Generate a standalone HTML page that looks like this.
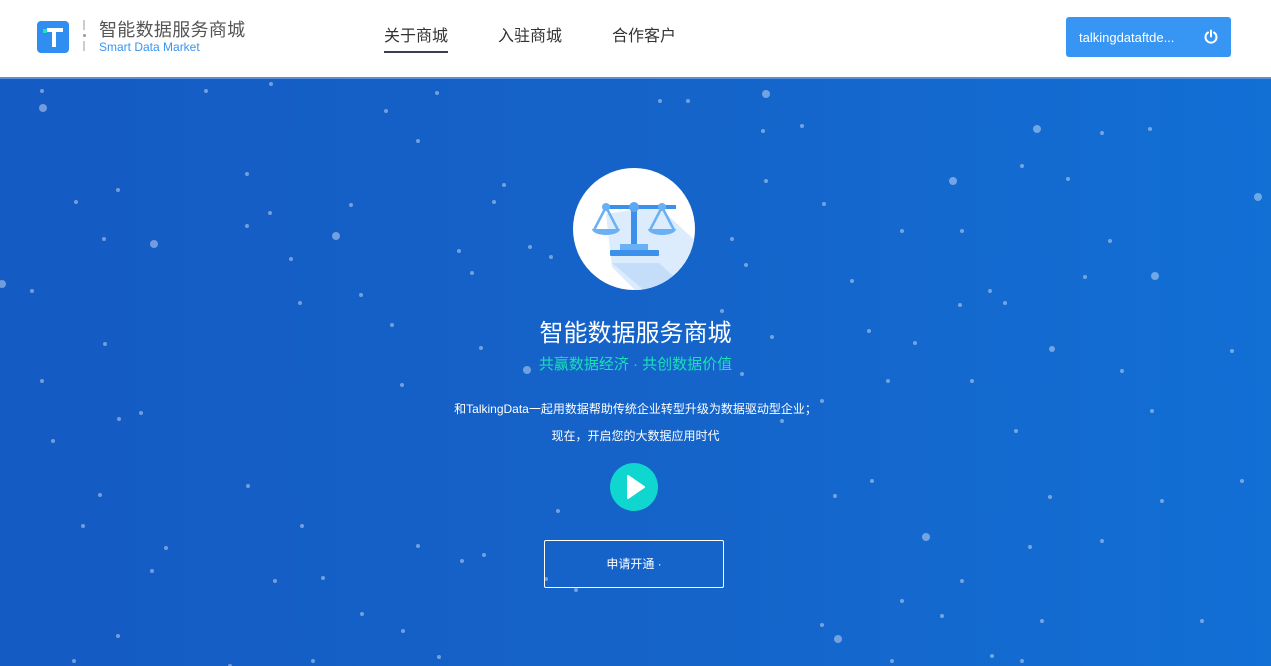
<!DOCTYPE html>
<html><head><meta charset="utf-8"><style>
*{margin:0;padding:0;box-sizing:border-box}
body{width:1271px;height:666px;overflow:hidden;font-family:"Liberation Sans","Noto Sans CJK SC",sans-serif;position:relative}
.hdr{position:absolute;left:0;top:0;width:1271px;height:77px;background:#fff}
.hero{position:absolute;left:0;top:77px;width:1271px;height:589px;background:linear-gradient(90deg,#145bc3 0%,#1563c9 50%,#126fd4 100%);border-top:2px solid #5a8fd8;overflow:hidden}
.logo{position:absolute;left:37px;top:21px;width:32px;height:32px;background:#2f8ef0;border-radius:4px}
.sep{position:absolute;left:83px;top:20px;width:2px;height:32px}
.t1{position:absolute;left:99px;top:19px;font-size:18px;line-height:22px;color:#555;letter-spacing:0.3px}
.t2{position:absolute;left:99px;top:40px;font-size:12px;line-height:14px;color:#3a95ee}
.nav{position:absolute;top:22px;font-size:16px;color:#333}
.btn{position:absolute;left:1066px;top:17px;width:165px;height:40px;background:#3795f4;border-radius:3px;color:#fff;font-size:13px;padding:13px 0 0 13px}
.dots{position:absolute;left:0;top:0;width:4px;height:4px;border-radius:50%;background:transparent;color:rgba(255,255,255,.4)}
.c{position:absolute;left:0;width:1271px;text-align:center}
</style></head><body>
<div class="hdr">
 <div class="logo"><svg width="32" height="32"><rect x="6" y="8" width="4" height="4" fill="#22e0c0"/><rect x="10" y="7" width="16" height="4" fill="#fff"/><rect x="15" y="7" width="4" height="19" fill="#fff"/></svg></div>
 <div class="sep"><div style="width:2px;height:10px;background:#ccc"></div><div style="width:3px;height:3px;background:#999;margin:4px 0;border-radius:50%"></div><div style="width:2px;height:10px;background:#ccc"></div></div>
 <div class="t1">智能数据服务商城</div>
 <div class="t2">Smart Data Market</div>
 <div class="nav" style="left:384px">关于商城</div>
 <div style="position:absolute;left:384px;top:51px;width:64px;height:2px;background:#3a3f4c"></div>
 <div class="nav" style="left:498px">入驻商城</div>
 <div class="nav" style="left:612px">合作客户</div>
 <div class="btn">talkingdataftde...
  <svg style="position:absolute;left:137px;top:12px" width="16" height="16" viewBox="0 0 16 16"><path d="M5 3.5A5.5 5.5 0 1 0 11 3.5" fill="none" stroke="#fff" stroke-width="2" stroke-linecap="round"/><path d="M8 1.5V7.5" stroke="#fff" stroke-width="2" stroke-linecap="round"/></svg>
 </div>
</div>
<div class="hero">
 <div class="dots" style="box-shadow:41px 27px 0 2px,204px 10px,269px 3px,74px 121px,116px 109px,152px 163px 0 2px,102px 158px,268px 132px,245px 93px,334px 155px 0 2px,349px 124px,0 203px 0 2px,30px 210px,298px 222px,289px 178px,245px 145px,359px 214px,390px 244px,103px 263px,40px 300px,117px 338px,139px 332px,51px 360px,98px 414px,81px 445px,246px 405px,300px 445px,164px 467px,150px 490px,273px 500px,321px 497px,401px 550px,437px 576px,311px 580px,360px 533px,116px 555px,72px 580px,228px 585px,40px 10px,435px 12px,384px 30px,416px 60px,492px 121px,502px 104px,528px 166px,549px 176px,457px 170px,470px 192px,400px 304px,479px 267px,525px 289px 0 2px,556px 430px,460px 480px,482px 474px,416px 465px,574px 509px,544px 498px,658px 20px,686px 20px,764px 13px 0 2px,800px 45px,761px 50px,764px 100px,730px 158px,744px 184px,720px 230px,740px 293px,780px 340px,770px 256px,820px 320px,850px 200px,822px 123px,867px 250px,913px 262px,924px 456px 0 2px,886px 300px,951px 100px 0 2px,988px 210px,1003px 222px,1020px 85px,1035px 48px 0 2px,1066px 98px,1100px 52px,1148px 48px,1083px 196px,1108px 160px,1153px 195px 0 2px,1050px 268px 0 1px,1256px 116px 0 2px,958px 224px,1014px 350px,970px 300px,1048px 416px,960px 500px,1028px 466px,1040px 540px,1100px 460px,1160px 420px,1200px 540px,990px 575px,900px 520px,836px 558px 0 2px,820px 544px,833px 415px,870px 400px,900px 150px,960px 150px,1120px 290px,1150px 330px,1230px 270px,1240px 400px,1020px 580px,890px 580px,940px 535px"></div>
 <svg style="position:absolute;left:572px;top:88px" width="124" height="124" viewBox="0 0 124 124">
  <defs><clipPath id="cc"><circle cx="62" cy="62" r="61"/></clipPath></defs>
  <circle cx="62" cy="62" r="61" fill="#fff"/>
  <g clip-path="url(#cc)"><path d="M34 47 L86 39 L130 80 L130 130 L70 130 L40 100Z" fill="#dcecfc"/><path d="M40 96 L87 96 L124 130 L80 130Z" fill="#c4defa"/></g>
  <rect x="34" y="38" width="70" height="4" fill="#3a90ea"/>
  <rect x="59" y="38" width="6" height="40" fill="#3a90ea"/>
  <circle cx="62" cy="40" r="5" fill="#5ea7f2"/>
  <circle cx="34" cy="40" r="4" fill="#6ab0f4"/><circle cx="90" cy="40" r="4" fill="#6ab0f4"/>
  <path d="M34 40 L22 63 M34 40 L46 63 M90 40 L78 63 M90 40 L102 63" stroke="#6ab0f4" stroke-width="2.5"/>
  <path d="M20 62 H48 A14 6 0 0 1 20 62Z" fill="#6ab0f4"/>
  <path d="M76 62 H104 A14 6 0 0 1 76 62Z" fill="#6ab0f4"/>
  <rect x="48" y="77" width="28" height="6" fill="#6ab0f4"/>
  <rect x="38" y="83" width="49" height="6" rx="1" fill="#3a90ea"/>
 </svg>
 <div class="c" style="top:234px;font-size:24px;color:#fff">智能数据服务商城</div>
 <div class="c" style="top:274px;font-size:15px;color:#19e0b8">共赢数据经济 · 共创数据价值</div>
 <div class="c" style="top:321px;font-size:12px;color:#fff">和TalkingData一起用数据帮助传统企业转型升级为数据驱动型企业；</div>
 <div class="c" style="top:348px;font-size:12px;color:#fff">现在，开启您的大数据应用时代</div>
 <div style="position:absolute;left:610px;top:384px;width:48px;height:48px;border-radius:50%;background:#0fd6cf"><svg width="48" height="48"><path d="M18 13 L34 24 L18 35Z" fill="#fff" stroke="#fff" stroke-linejoin="round" stroke-width="2"/></svg></div>
 <div style="position:absolute;left:544px;top:461px;width:180px;height:48px;border:1px solid #fff;border-radius:2px;color:#fff;font-size:12px;text-align:center;line-height:46px">申请开通 ·</div>
</div>
</body></html>
